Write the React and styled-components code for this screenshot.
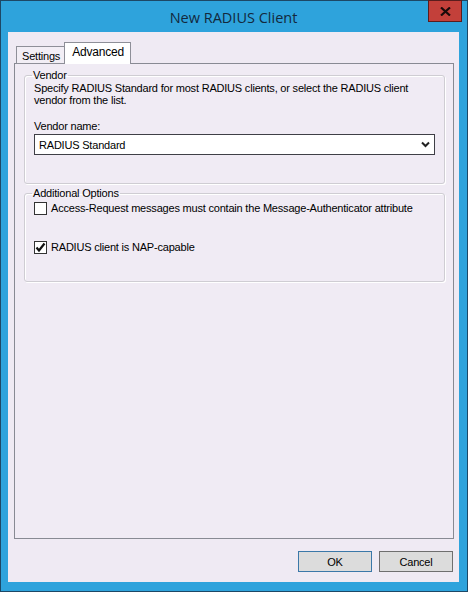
import React from 'react';
import styled, { createGlobalStyle } from 'styled-components';

const GlobalStyle = createGlobalStyle`
  html, body {
    margin: 0;
    padding: 0;
    background: #2ea3dc;
  }
  body {
    font-family: "Liberation Sans", Arial, sans-serif;
    font-size: 11px;
    letter-spacing: -0.2px;
    color: #000;
  }
`;

const Window = styled.div`
  box-sizing: border-box;
  width: 468px;
  height: 592px;
  border: 1px solid #1d4866;
  background: #2ea3dc;
  display: flex;
  flex-direction: column;
  padding: 0 8px 9px 7px;
  position: relative;
`;

const TitleBar = styled.div`
  height: 30px;
  flex: none;
  display: flex;
  align-items: center;
  justify-content: center;
  font-family: "Open Sans", "Noto Sans", sans-serif;
  font-size: 14.5px;
  letter-spacing: 0;
  color: #13293d;
  padding-top: 1px;
`;

const CloseButton = styled.button`
  position: absolute;
  top: -1px;
  right: 5px;
  width: 34px;
  height: 22px;
  box-sizing: border-box;
  border: 1px solid #5a1d1d;
  background: #c3403a;
  padding: 0;
  display: flex;
  align-items: center;
  justify-content: center;
`;

const Client = styled.div`
  flex: 1;
  background: #efeaf3;
  display: flex;
  flex-direction: column;
  padding: 11px 5px 10px 6px;
  min-height: 0;
`;

const TabStrip = styled.div`
  display: flex;
  align-items: flex-end;
  padding-left: 2px;
  height: 21px;
  position: relative;
  z-index: 1;
  margin-bottom: -1px;
`;

const Tab = styled.div`
  box-sizing: border-box;
  height: ${p => (p.active ? '22px' : '18px')};
  padding: ${p => (p.active ? '2px 6px 0 7px' : '2px 4px 0 5px')};
  margin-left: ${p => (p.active ? '-1px' : '0')};
  border: 1px solid #8e8f98;
  border-bottom: ${p => (p.active ? 'none' : '1px solid #8e8f98')};
  background: ${p => (p.active ? '#ffffff' : '#f2eef5')};
  font-size: ${p => (p.active ? '12px' : '11px')};
  line-height: 15px;
`;

const Panel = styled.div`
  flex: 1;
  box-sizing: border-box;
  border: 1px solid #888a93;
  background: #f0ebf4;
  padding: 5px 8px 0 9px;
  display: flex;
  flex-direction: column;
  gap: 3px;
`;

const Group = styled.fieldset`
  margin: 0;
  border: 1px solid #cfcdd3;
  border-radius: 3px;
  box-shadow: inset 1px 1px 0 #ffffff, 1px 1px 0 #ffffff;
  padding: 0 9px 0 9px;
  height: ${p => p.h}px;
  box-sizing: border-box;
`;

const Legend = styled.legend`
  padding: 0 1px;
  margin-left: -2px;
  font-size: 11px;
  line-height: 13px;
`;

const Hint = styled.p`
  margin: 0;
  font-size: 11px;
  line-height: 12px;
  width: 385px;
`;

const FieldLabel = styled.div`
  margin-top: 14px;
  font-size: 11px;
  line-height: 13px;
`;

const Select = styled.div`
  margin-top: 1px;
  height: 21px;
  box-sizing: border-box;
  border: 1px solid #3f3f46;
  background: #fff;
  display: flex;
  align-items: center;
  justify-content: space-between;
  padding: 0 4px 0 4px;
  font-size: 11px;
`;

const CheckRow = styled.label`
  display: flex;
  align-items: center;
  gap: 4px;
  margin-top: ${p => p.mt}px;
  font-size: 11px;
  line-height: 13px;
`;

const Box = styled.span`
  width: 13px;
  height: 13px;
  box-sizing: border-box;
  border: 1px solid #333;
  background: #fff;
  display: flex;
  align-items: center;
  justify-content: center;
  flex: none;
`;

const Footer = styled.div`
  display: flex;
  justify-content: flex-end;
  gap: 7px;
  padding-top: 12px;
  padding-right: 1px;
`;

const Button = styled.button`
  width: 74px;
  height: 21px;
  box-sizing: border-box;
  border: 1px solid ${p => (p.primary ? '#3b78a8' : '#6f6f6f')};
  background: #dcdcdc;
  font-family: "Liberation Sans", Arial, sans-serif;
  font-size: 11px;
  letter-spacing: -0.2px;
  color: #000;
  padding: 0;
`;

const Check = () => (
  <svg width="11" height="11" viewBox="0 0 11 11">
    <path d="M1.5 5.5 L4 8.5 L9.5 1.5" fill="none" stroke="#111" strokeWidth="2.2" />
  </svg>
);

const Chevron = () => (
  <svg width="9" height="7" viewBox="0 0 9 7">
    <path d="M1 1.5 L4.5 5 L8 1.5" fill="none" stroke="#222" strokeWidth="2" />
  </svg>
);

const App = () => (
  <>
    <GlobalStyle />
    <Window>
      <TitleBar>New RADIUS Client</TitleBar>
      <CloseButton aria-label="Close">
        <svg width="11" height="9" viewBox="0 0 11 9">
          <path d="M1 0.5 L10 8.5 M10 0.5 L1 8.5" stroke="#1a0a0a" strokeWidth="2.2" />
        </svg>
      </CloseButton>
      <Client>
        <TabStrip>
          <Tab>Settings</Tab>
          <Tab active>Advanced</Tab>
        </TabStrip>
        <Panel>
          <Group h={115}>
            <Legend>Vendor</Legend>
            <Hint>
              Specify RADIUS Standard for most RADIUS clients, or select the RADIUS client vendor
              from the list.
            </Hint>
            <FieldLabel>Vendor name:</FieldLabel>
            <Select>
              <span>RADIUS Standard</span>
              <Chevron />
            </Select>
          </Group>
          <Group h={95}>
            <Legend>Additional Options</Legend>
            <CheckRow mt={2}>
              <Box />
              Access-Request messages must contain the Message-Authenticator attribute
            </CheckRow>
            <CheckRow mt={26}>
              <Box>
                <Check />
              </Box>
              RADIUS client is NAP-capable
            </CheckRow>
          </Group>
        </Panel>
        <Footer>
          <Button primary>OK</Button>
          <Button>Cancel</Button>
        </Footer>
      </Client>
    </Window>
  </>
);

export default App;
